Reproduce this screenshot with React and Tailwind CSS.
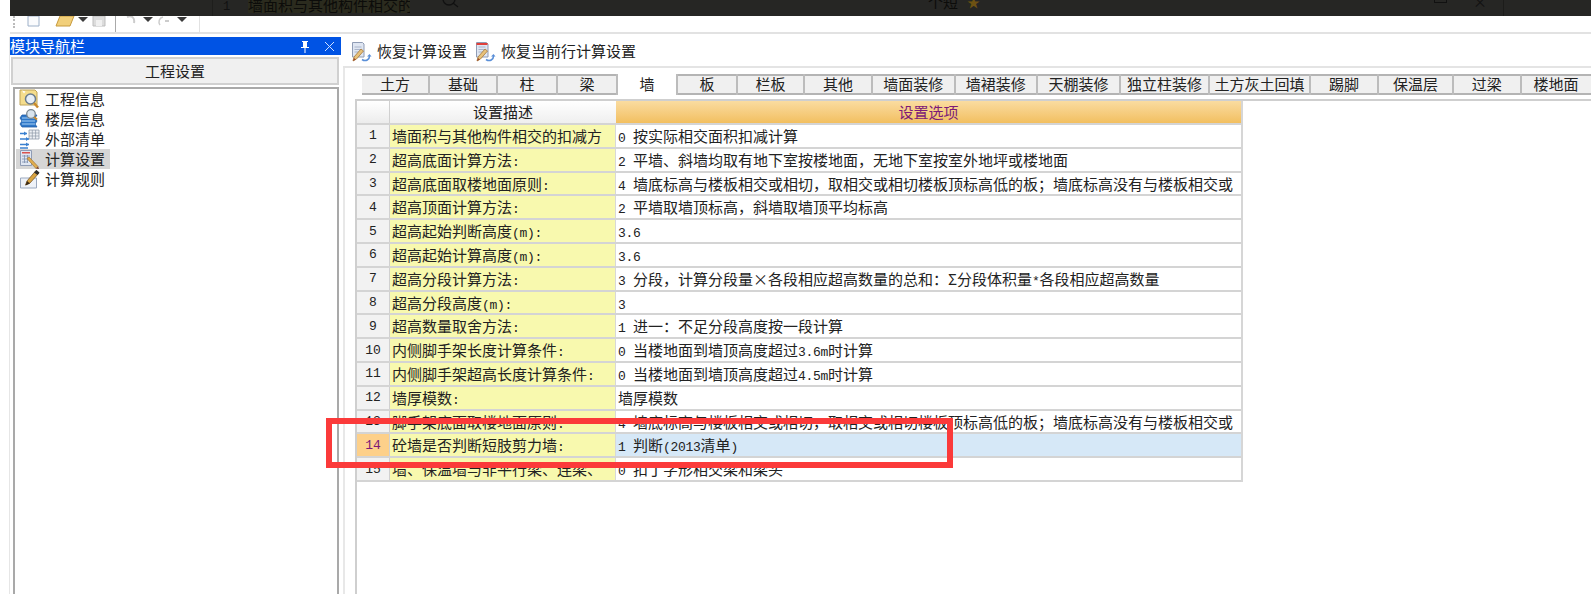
import React from "react";

const FONT = { fontFamily: '"Noto Sans CJK SC", "Liberation Sans", sans-serif' };

function Mixed({ text }) {
  const parts = text.split(/([\x20-\x7E]+)/).filter(Boolean);
  return (
    <>
      {parts.map((p, i) =>
        /^[\x20-\x7E]+$/.test(p) ? (
          <span key={i} className="text-[13px] tracking-[-0.3px] [font-family:'Liberation_Mono',monospace]">{p}</span>
        ) : (
          <span key={i}>{p}</span>
        )
      )}
    </>
  );
}

const TABS = [
  ["土方", "w-[68px]"], ["基础", "w-[68px]"], ["柱", "w-[60px]"], ["梁", "w-[60px]"], ["墙", "w-[60px]"],
  ["板", "w-[60px]"], ["栏板", "w-[67px]"], ["其他", "w-[68px]"], ["墙面装修", "w-[82.5px]"], ["墙裙装修", "w-[82.5px]"],
  ["天棚装修", "w-[83px]"], ["独立柱装修", "w-[89px]"], ["土方灰土回填", "w-[101px]"], ["踢脚", "w-[68px]"], ["保温层", "w-[75px]"],
  ["过梁", "w-[67.5px]"], ["楼地面", "w-[71px]"],
];

const ROWS = [
  ["墙面积与其他构件相交的扣减方", "0 按实际相交面积扣减计算"],
  ["超高底面计算方法:", "2 平墙、斜墙均取有地下室按楼地面，无地下室按室外地坪或楼地面"],
  ["超高底面取楼地面原则:", "4 墙底标高与楼板相交或相切，取相交或相切楼板顶标高低的板；墙底标高没有与楼板相交或"],
  ["超高顶面计算方法:", "2 平墙取墙顶标高，斜墙取墙顶平均标高"],
  ["超高起始判断高度(m):", "3.6"],
  ["超高起始计算高度(m):", "3.6"],
  ["超高分段计算方法:", "3 分段，计算分段量×各段相应超高数量的总和：Σ分段体积量*各段相应超高数量"],
  ["超高分段高度(m):", "3"],
  ["超高数量取舍方法:", "1 进一：不足分段高度按一段计算"],
  ["内侧脚手架长度计算条件:", "0 当楼地面到墙顶高度超过3.6m时计算"],
  ["内侧脚手架超高长度计算条件:", "0 当楼地面到墙顶高度超过4.5m时计算"],
  ["墙厚模数:", "墙厚模数"],
  ["脚手架底面取楼地面原则:", "4 墙底标高与楼板相交或相切，取相交或相切楼板顶标高低的板；墙底标高没有与楼板相交或"],
  ["砼墙是否判断短肢剪力墙:", "1 判断(2013清单)"],
  ["墙、保温墙与非平行梁、连梁、", "0 扣丁字形相交梁和梁头"],
];

function RestoreIcon({ red }) {
  return (
    <svg width="21" height="22" viewBox="0 0 21 22" className="shrink-0">
      <path d="M1.500 1.500h10l1.500 1.500v13h-11.500z" fill="#dfe6f2" stroke="#8f9cb5" />
      {red && <path d="M1.500 2h11v2h-11z" fill="#e0403a" />}
      <path d="M3.500 6h7M3.500 8.500h7M3.500 11h5" stroke="#a9b4c9" />
      <path d="M2 20l1-4 7-8 2.500 2-7 8z" fill="#e8c27a" stroke="#a5773a" strokeWidth=".8" />
      <path d="M2 20l1-3 2 1.500z" fill="#9e4a2a" />
      <path d="M11 18.500c4 2.500 7.500 0 7.500-3.500" fill="none" stroke="#5a8fd8" strokeWidth="1.600" />
      <path d="M16 15.500l2.500-2.500 2 2.500z" fill="#5a8fd8" />
    </svg>
  );
}

const NAV_ICONS = [
  <svg key="0" width="21" height="20" viewBox="0 0 21 20">
    <path d="M1 1h15l2 2v13H1z" fill="#f5dd8c" stroke="#bfa45a" />
    <path d="M3 1.500l2 3 1.500-2z" fill="#fff" />
    <circle cx="11.500" cy="10" r="5" fill="#e6eef8" stroke="#6b7c8e" strokeWidth="1.500" />
    <path d="M15 14l4 4.500" stroke="#c98a2c" strokeWidth="2.500" />
  </svg>,
  <svg key="1" width="21" height="20" viewBox="0 0 21 20">
    <path d="M3 6h15l-2 3 2 3-2 3 2 3H3l-2-3 2-3-2-3z" fill="#2f78c9" stroke="#1e5ca6" strokeWidth=".8" />
    <path d="M3 9h13M3 12h13M3 15h13" stroke="#a8d0f4" />
    <circle cx="12" cy="5" r="4.300" fill="#d9e4ee" stroke="#78858f" strokeWidth="1.300" />
    <path d="M15 8l3 2.500" stroke="#c98a2c" strokeWidth="2" />
  </svg>,
  <svg key="2" width="21" height="20" viewBox="0 0 21 20">
    <path d="M10 1h10v9H10z" fill="#eef1f5" stroke="#8e9aa8" strokeWidth=".8" />
    <path d="M10 4h10M10 7h10M13.300 1v9M16.600 1v9" stroke="#8e9aa8" strokeWidth=".7" />
    <path d="M1 4.500h7M1 10h9M1 15.500h9M1 19h8" stroke="#3a80d0" strokeWidth="1.300" />
    <path d="M5 2.500l3 2-3 2zM7 8l3 2-3 2zM7 13.500l3 2-3 2z" fill="#3a80d0" />
  </svg>,
  <svg key="3" width="21" height="20" viewBox="0 0 21 20">
    <path d="M1.500 1.500h11v15h-11z" fill="#dfe6f2" stroke="#8f9cb5" />
    <path d="M3 3h8v1.500H3z" fill="#d9534f" />
    <path d="M3 7h8M3 10h8M3 13h6M5.500 6v8M8.500 6v8" stroke="#7e90ae" strokeWidth=".8" />
    <path d="M8 9.500l2-1.500 9 9.500-2 2z" fill="#e0ad4e" stroke="#9f7433" strokeWidth=".7" />
    <path d="M17 19.500l2-2 1 2.500z" fill="#7a3a20" />
  </svg>,
  <svg key="4" width="21" height="20" viewBox="0 0 21 20">
    <path d="M1.500 9h16v10h-16z" fill="#eef2f8" stroke="#9aa8bf" />
    <path d="M6.500 16l1.500-4 9-10.500 3 2.500-9 10z" fill="#d9a441" stroke="#6b4b1e" strokeWidth=".7" />
    <path d="M15 3.500l2.500-2.500 3 2.500-2 2.500z" fill="#2c2c2c" />
    <path d="M6.500 16.500l1.500-4.500 3 2.500z" fill="#3a2a16" />
  </svg>,
];

const NAV = ["工程信息", "楼层信息", "外部清单", "计算设置", "计算规则"];

function Caret() {
  return <span className="block h-0 w-0 border-x-[5px] border-t-[5px] border-x-transparent border-t-[#3a3a3a]" />;
}

export default function App() {
  return (
    <div style={FONT} className="relative flex h-[594px] w-[1591px] flex-col overflow-hidden bg-white text-[15px] text-[#222]">
      {/* dimmed window behind */}
      <div className="ml-[10px] flex h-[16px] shrink-0 items-start overflow-hidden bg-[#262624] text-[15px] leading-[16px] text-[#0c0c0a]">
        <div className="ml-[202px] h-full w-[1px] bg-[#1e1e1c]" />
        <div className="ml-[10px] w-[25px] -mt-[1px] text-[#111] [font-family:'Liberation_Mono',monospace] text-[12px]">1</div>
        <div className="h-full w-[162px] -mt-[3px] overflow-hidden whitespace-nowrap bg-[#2b2b1e]">墙面积与其他构件相交的扣减方</div>
        <svg width="22" height="8" viewBox="0 0 22 8" className="ml-[30px]">
          <circle cx="9" cy="-1" r="6" fill="none" stroke="#111" strokeWidth="1.300" />
          <path d="M13 3l5 4" stroke="#111" strokeWidth="1.300" />
        </svg>
        <div className="ml-[466px] -mt-[6px] whitespace-nowrap">个短</div>
        <div className="ml-[9px] -mt-[4px] text-[13px] leading-[12px] text-[#6e5212]">★</div>
        <div className="ml-[454px] -mt-[6px] h-[9px] w-[13px] border border-[#111]" />
        <div className="ml-[26px] -mt-[4px] text-[14px] leading-[10px] text-[#111]">×</div>
        <div className="ml-[16px] h-full w-[1px] bg-[#1c1c1a]" />
      </div>

      {/* quick toolbar */}
      <div className="ml-[10px] flex h-[18px] shrink-0 border-b-2 border-[#e2e2e2]">
        <div className="flex h-[16px] w-[190px] items-start overflow-hidden border-r border-[#e2e2e2]">
          <div className="ml-[3px] mr-[11px] h-[12px] w-[2px] border-l-2 border-dotted border-[#bbb]" />
          <svg width="16" height="11" viewBox="0 0 16 11" className="shrink-0"><path d="M2 0h11v10H2z" fill="#fafbfd" stroke="#9db0c8" /></svg>
          <svg width="20" height="11" viewBox="0 0 20 11" className="ml-[13px] shrink-0"><path d="M5 0h14l-4 10H1z" fill="#f1cf7a" stroke="#c69a3d" /></svg>
          <span className="ml-[3px] mt-[1px]"><Caret /></span>
          <svg width="16" height="11" viewBox="0 0 16 11" className="ml-[3px] shrink-0"><path d="M2 0h12v10H2z" fill="#dcdcdc" stroke="#bdbdbd" /><path d="M5 4h6v6H5z" fill="#f0f0f0" /></svg>
          <div className="ml-[8px] h-[16px] w-[1px] shrink-0 bg-[#aaa]" />
          <svg width="14" height="11" viewBox="0 0 14 11" className="ml-[8px] shrink-0"><path d="M3 1c5-2 8 1 7 6" fill="none" stroke="#ccc" strokeWidth="2" /></svg>
          <span className="ml-[5px] mt-[1px]"><Caret /></span>
          <svg width="14" height="11" viewBox="0 0 14 11" className="ml-[4px] shrink-0"><path d="M6 1C2 2 1 6 3 9" fill="none" stroke="#ccc" strokeWidth="1.500" /><path d="M8 5h4" stroke="#ccc" strokeWidth="2" /></svg>
          <span className="ml-[6px] mt-[1px]"><Caret /></span>
        </div>
      </div>

      <div className="flex min-h-0 flex-1 pt-[3px]">
        {/* left margin */}
        <div className="w-[10px] shrink-0 border-r border-[#e6e6e6]" />

        {/* module navigation */}
        <aside className="flex w-[331px] shrink-0 flex-col">
          <div className="flex h-[18px] shrink-0 items-center justify-between bg-[#0053e4] pr-[6px] leading-[18px] text-white">
            <span>模块导航栏</span>
            <div className="flex items-center gap-[13px]">
              <svg width="12" height="13" viewBox="0 0 12 13">
                <path d="M3 1h6v1H8v5h2v1H2V7h2V2H3zM5.500 8h1v5h-1z" fill="#fff" />
              </svg>
              <svg width="11" height="11" viewBox="0 0 11 11"><path d="M1 1l9 9M10 1l-9 9" stroke="#cfe0ff" strokeWidth="1" /></svg>
            </div>
          </div>
          <div className="ml-[1px] mr-[2px] mt-[2px] flex h-[28px] shrink-0 items-center justify-center border-2 border-[#d0d0d0] bg-[#f0f0f0] pt-[1px]">工程设置</div>
          <div className="ml-[3px] mr-[2px] mt-[2px] min-h-0 flex-1 border-2 border-b-0 border-[#a9a9a9]">
            {NAV.map((t, i) => (
              <div key={t} className="flex h-[20px] items-center">
                <span className={`ml-[1px] flex h-[20px] w-[94px] items-center pl-[3px] ${i === 3 ? "bg-[#d6d6d6]" : ""}`}>
                  <span className="flex w-[26px] shrink-0 items-center">{NAV_ICONS[i]}</span>
                  <span className="whitespace-nowrap">{t}</span>
                </span>
              </div>
            ))}
          </div>
        </aside>

        {/* main */}
        <main className="flex min-w-0 flex-1 flex-col pl-[2px]">
          <div className="flex h-[31px] shrink-0 items-center border-b-2 border-[#e4e4e4] pl-[8px]">
            <RestoreIcon />
            <span className="ml-[5px] whitespace-nowrap">恢复计算设置</span>
            <span className="ml-[8px]"><RestoreIcon red /></span>
            <span className="ml-[5px] whitespace-nowrap">恢复当前行计算设置</span>
          </div>
          <div className="flex min-h-0 flex-1 flex-col border-l-2 border-[#e8e8e8]">
            <div className="ml-[17px] mt-[6px] flex h-[21px] shrink-0 border-y-2 border-[#b4b4b4] bg-[#f0f0f0]">
              {TABS.map(([t, w], i) => (
                <div key={t} className={`${w} -my-[2px] flex h-[21px] shrink-0 items-center justify-center whitespace-nowrap border-r-2 border-[#bcbcbc] ${i === 4 ? "border-y-0 bg-white" : ""}`}>
                  {t}
                </div>
              ))}
            </div>
            <div className="ml-[10px] mt-[4px] min-h-0 flex-1 border-l-2 border-t-2 border-[#cfcfcf]">
              <div className="w-[886px] border-r-2 border-[#d6d6d6]">
                <div className="flex h-[24px] border-b-2 border-[#d4d4d4]">
                  <div className="w-[33px] shrink-0 border-r border-[#d0d0d0] bg-gradient-to-b from-white to-[#ececec]" />
                  <div className="flex w-[226px] shrink-0 items-center justify-center bg-gradient-to-b from-white to-[#efefef]">设置描述</div>
                  <div className="flex flex-1 items-center justify-center bg-gradient-to-b from-[#fadca0] to-[#f2bf5f] text-[#7c1a78]">设置选项</div>
                </div>
                {ROWS.map(([d, v], i) => {
                  const sel = i === 13;
                  return (
                    <div key={i} className="flex h-[23.8px] border-b-2 border-[#d4d4d4] leading-[21px]">
                      <div className={`flex w-[33px] shrink-0 items-center justify-center border-r border-[#d0d0d0] text-[13px] [font-family:'Liberation_Mono',monospace] ${sel ? "bg-[#fdd08a] text-[#7c1a78]" : "bg-[#f2f2f2]"}`}>{i + 1}</div>
                      <div className="w-[226px] shrink-0 overflow-hidden whitespace-pre border-r border-[#d8d8d8] bg-[#f8f9ae] pl-[2px]"><Mixed text={d} /></div>
                      <div className={`flex-1 overflow-hidden whitespace-pre pl-[2px] ${sel ? "bg-[#d6e8f7]" : "bg-white"}`}><Mixed text={v} /></div>
                    </div>
                  );
                })}
              </div>
            </div>
          </div>
        </main>
      </div>

      {/* red annotation box */}
      <div className="absolute left-[326px] top-[418px] h-[50px] w-[627px] border-[6px] border-[#fb3a3a]" />
    </div>
  );
}
